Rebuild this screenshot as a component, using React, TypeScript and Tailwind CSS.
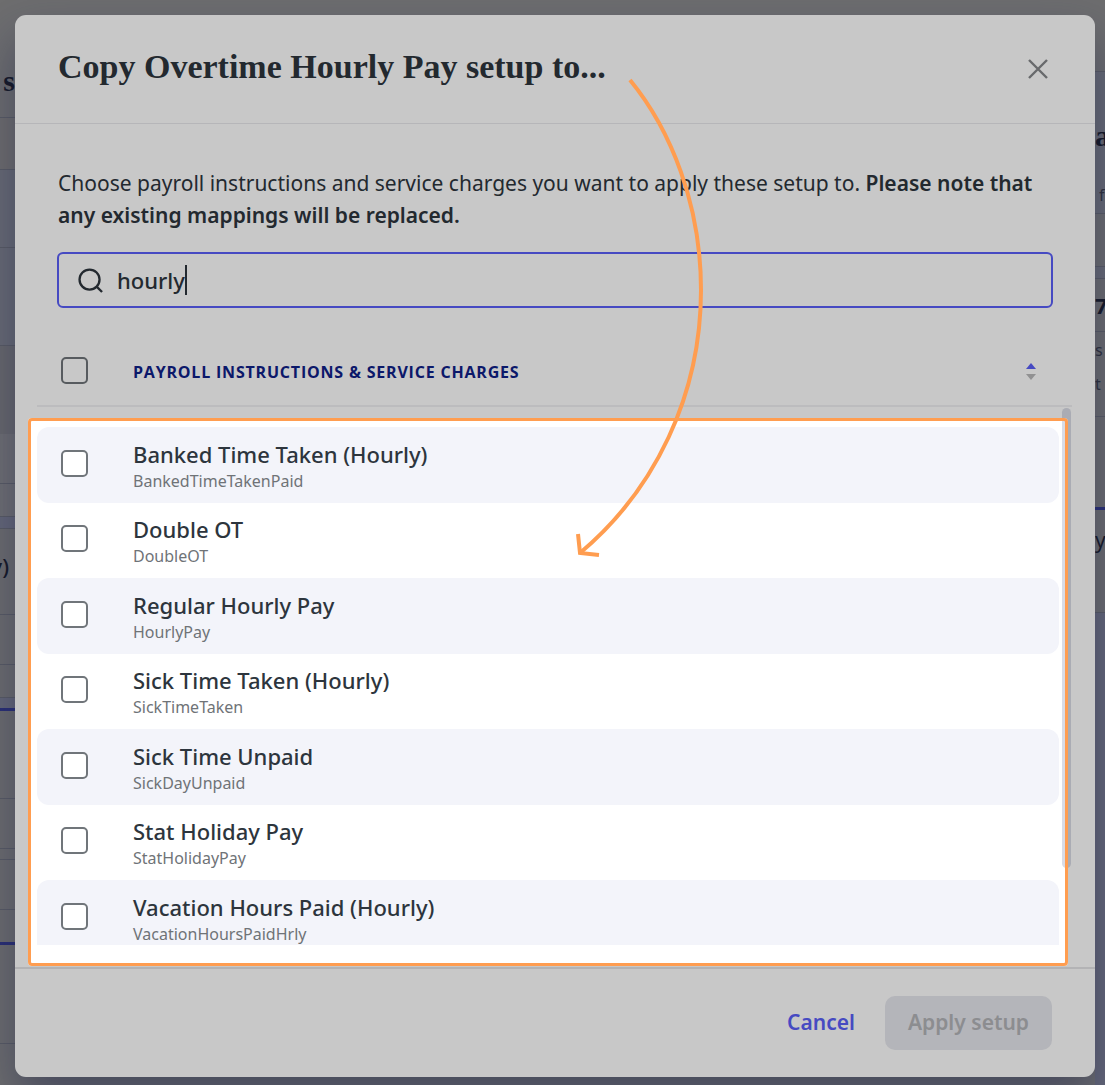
import { useState } from 'react';

const instructions = [
    { name: 'Banked Time Taken (Hourly)', code: 'BankedTimeTakenPaid' },
    { name: 'Double OT', code: 'DoubleOT' },
    { name: 'Regular Hourly Pay', code: 'HourlyPay' },
    { name: 'Sick Time Taken (Hourly)', code: 'SickTimeTaken' },
    { name: 'Sick Time Unpaid', code: 'SickDayUnpaid' },
    { name: 'Stat Holiday Pay', code: 'StatHolidayPay' },
    { name: 'Vacation Hours Paid (Hourly)', code: 'VacationHoursPaidHrly' },
];

const line = 'border-b border-[#747680]';
const accent = 'border-b-[3px] border-[#363d96]';
const serif = 'font-["Liberation_Serif",serif] font-bold';

const leftCells = [
    { style: `h-[118px] items-center pt-11 text-[30px] ${serif} ${line}`, text: 's' },
    { style: `h-[52px] bg-[#8e8c8c] ${line}` },
    { style: `h-[78px] bg-[#868995] ${line}` },
    { style: `h-[98px] bg-[#868995] ${line}` },
    { style: 'h-[88px] bg-[#86868b]' },
    { style: `h-[50px] bg-[#8f8f93] ${line}` },
    { style: `h-[33px] bg-[#8f8f93] ${line}` },
    { style: `h-[12px] bg-[#82859a] ${line}` },
    { style: `h-[86px] items-center pr-1.5 pb-3 text-[22px] font-medium ${line}`, text: 'y)' },
    { style: `h-[50px] ${line}` },
    { style: `h-[33px] ${line}` },
    { style: `h-[13px] bg-[#82859a] ${accent}` },
    { style: `h-[88px] ${line}` },
    { style: `h-[50px] ${line}` },
    { style: `h-[11px] ${line}` },
    { style: `h-[50px] ${line}` },
    { style: `h-[35px] ${accent}` },
    { style: `h-[99px] ${line}` },
];

const rightCells = [
    { style: `h-[72px] ${line}` },
    { style: `h-[88px] bg-[#868995] items-center pt-10 text-[30px] ${serif}`, text: 'a' },
    { style: `h-[54px] bg-[#868995] items-center pl-1 pt-4 text-base text-[#3c3f4c] ${line}`, text: 'f' },
    { style: `h-[53px] ${line}` },
    { style: `h-[12px] bg-[#868995] ${line}` },
    { style: `h-[53px] items-center text-[22px] font-bold ${line}`, text: '7' },
    { style: 'h-[36px] items-center text-base text-[#3c3f4c]', text: 's' },
    { style: `h-[49px] items-center pb-4 text-base text-[#3c3f4c] ${line}`, text: 't' },
    { style: `h-[93px] ${accent}` },
    { style: `h-[103px] items-start pt-5 text-[21px] ${line}`, text: 'y' },
    { style: 'grow bg-[#82859a]' },
];

function Gutter({ cells, className }: { cells: { style: string; text?: string }[]; className: string }) {
    return (
        <div aria-hidden="true" className={`flex flex-col overflow-hidden text-[#1b1f30] ${className}`}>
            {cells.map((cell, i) => (
                <div key={i} className={`flex shrink-0 whitespace-nowrap leading-none ${cell.style}`}>
                    {cell.text}
                </div>
            ))}
        </div>
    );
}

function Checkbox({ label }: { label: string }) {
    return (
        <input
            type="checkbox"
            aria-label={label}
            className="block size-[27px] appearance-none rounded-[5px] border-2 border-[#70757a] bg-white checked:bg-[#5a5ff8]"
        />
    );
}

export default function App() {
    const [query, setQuery] = useState('hourly');

    return (
        <div className="flex min-h-screen overflow-hidden bg-[#8c8c8e] font-['Noto_Sans',sans-serif] text-[#2d353d]">
            <Gutter cells={leftCells} className="w-[15px] [&>div]:justify-end" />

            <div
                role="dialog"
                aria-labelledby="copy-title"
                className="relative z-10 mt-[15px] mb-2 flex min-w-0 flex-1 flex-col rounded-[11px] bg-white shadow-[0_24px_48px_rgba(30,40,90,0.45)]"
            >
                {/* Header */}
                <div className="flex h-[109px] items-center justify-between border-b border-[#e9e9ec] pr-[47px] pb-1 pl-[43px]">
                    <h1 id="copy-title" className="font-['Liberation_Serif',serif] text-[34px] leading-10 font-bold">
                        Copy Overtime Hourly Pay setup to...
                    </h1>
                    <button type="button" aria-label="Close" className="pt-1 text-[#85878a]">
                        <svg viewBox="0 0 20 20" className="size-5" fill="none" stroke="currentColor" strokeWidth="2.4">
                            <path d="M1 1L19 19M19 1L1 19" />
                        </svg>
                    </button>
                </div>

                {/* Intro and search */}
                <div className="px-[42px] pt-[43px]">
                    <p className="px-px text-[21px] leading-8">
                        Choose payroll instructions and service charges you want to apply these setup to.{' '}
                        <strong className="font-semibold">
                            Please note that any existing mappings will be replaced.
                        </strong>
                    </p>
                    <label className="mt-[21px] flex h-14 items-center rounded-md border-2 border-[#5a5ff8] pl-[19px]">
                        <svg viewBox="0 0 26 26" className="mr-3.5 size-[25px]" fill="none" stroke="currentColor" strokeWidth="2.4">
                            <circle cx="12" cy="12" r="10.4" />
                            <path d="M19.4 19.4L25 25" />
                        </svg>
                        <input
                            type="text"
                            aria-label="Search"
                            value={query}
                            onChange={(e) => setQuery(e.target.value)}
                            className="field-sizing-content text-[22px] font-medium caret-transparent outline-none"
                        />
                        <span className="h-[30px] w-0.5 bg-[#2d353d]" />
                    </label>
                </div>

                {/* List */}
                <div className="relative mt-7 mr-[23px] mb-[22px] ml-[22px]">
                    <div className="flex max-h-[609px] overflow-hidden">
                        <table className="h-fit grow border-separate border-spacing-0 text-left">
                            <thead>
                                <tr className="h-[71px]">
                                    <th className="w-[96px] border-b-2 border-[#f0f0f2] pl-6">
                                        <Checkbox label="Select all" />
                                    </th>
                                    <th className="border-b-2 border-[#f0f0f2] pt-0.5 pr-[23px]">
                                        <div className="flex items-center justify-between">
                                            <span className="font-['Open_Sans',sans-serif] text-base font-bold tracking-wider text-[#0f2188] uppercase">
                                                Payroll instructions &amp; service charges
                                            </span>
                                            <button type="button" aria-label="Sort">
                                                <svg viewBox="0 0 10 17" className="h-[17px] w-2.5">
                                                    <path d="M5 0L10 6H0Z" fill="#5a5ff8" />
                                                    <path d="M5 17L10 11H0Z" fill="#b9b9bb" />
                                                </svg>
                                            </button>
                                        </div>
                                    </th>
                                </tr>
                            </thead>
                            <tbody className="before:block before:h-5 before:content-['']">
                                {instructions.map((item) => (
                                    <tr key={item.code} className="group odd:h-[76px] even:h-[75px]">
                                        <td className="rounded-l-xl pt-0 pb-1 pl-6 group-odd:bg-[#f3f4fa]">
                                            <Checkbox label={item.name} />
                                        </td>
                                        <td className="rounded-r-xl p-0 pt-px group-odd:bg-[#f3f4fa]">
                                            <div className="text-[22px] leading-[30px] font-medium">{item.name}</div>
                                            <div className="text-base leading-6 text-[#6f7377]">{item.code}</div>
                                        </td>
                                    </tr>
                                ))}
                            </tbody>
                        </table>
                        <div className="w-[13px] shrink-0">
                            <div className="h-[71px] border-b-2 border-[#f0f0f2]" />
                            <div className="mt-px ml-[3px] h-[460px] w-[9px] rounded-full bg-[#d9dce6]" />
                        </div>
                    </div>

                    {/* Spotlight over the rows, everything else is dimmed */}
                    <div className="pointer-events-none absolute -inset-x-[9px] top-[82px] -bottom-[21px] mr-[13px] rounded border-3 border-[#ff9d50] shadow-[0_0_0_9999px_rgba(0,0,0,0.216)]" />
                </div>

                {/* Footer */}
                <div className="flex h-[110px] items-center justify-end gap-[30px] border-t-2 border-[#e4e4e7] pr-[43px] text-[21px] font-semibold">
                    <button type="button" className="text-[#5a5ff8]">Cancel</button>
                    <button type="button" disabled className="h-[54px] rounded-[10px] bg-[#e6e7ed] px-[23px] text-[#b3b4b8]">
                        Apply setup
                    </button>
                </div>

                <svg
                    viewBox="0 0 150 500"
                    className="pointer-events-none absolute top-[60px] left-[555px] h-[500px] w-[150px]"
                    fill="none"
                    stroke="#ff9d50"
                    strokeWidth="4"
                >
                    <path d="M60 5C101 55 131 130 131 215C131 320 85 415 10 478" />
                    <path d="M8 459L10 478L29 480" />
                </svg>
            </div>

            <Gutter cells={rightCells} className="w-[10px]" />
        </div>
    );
}
